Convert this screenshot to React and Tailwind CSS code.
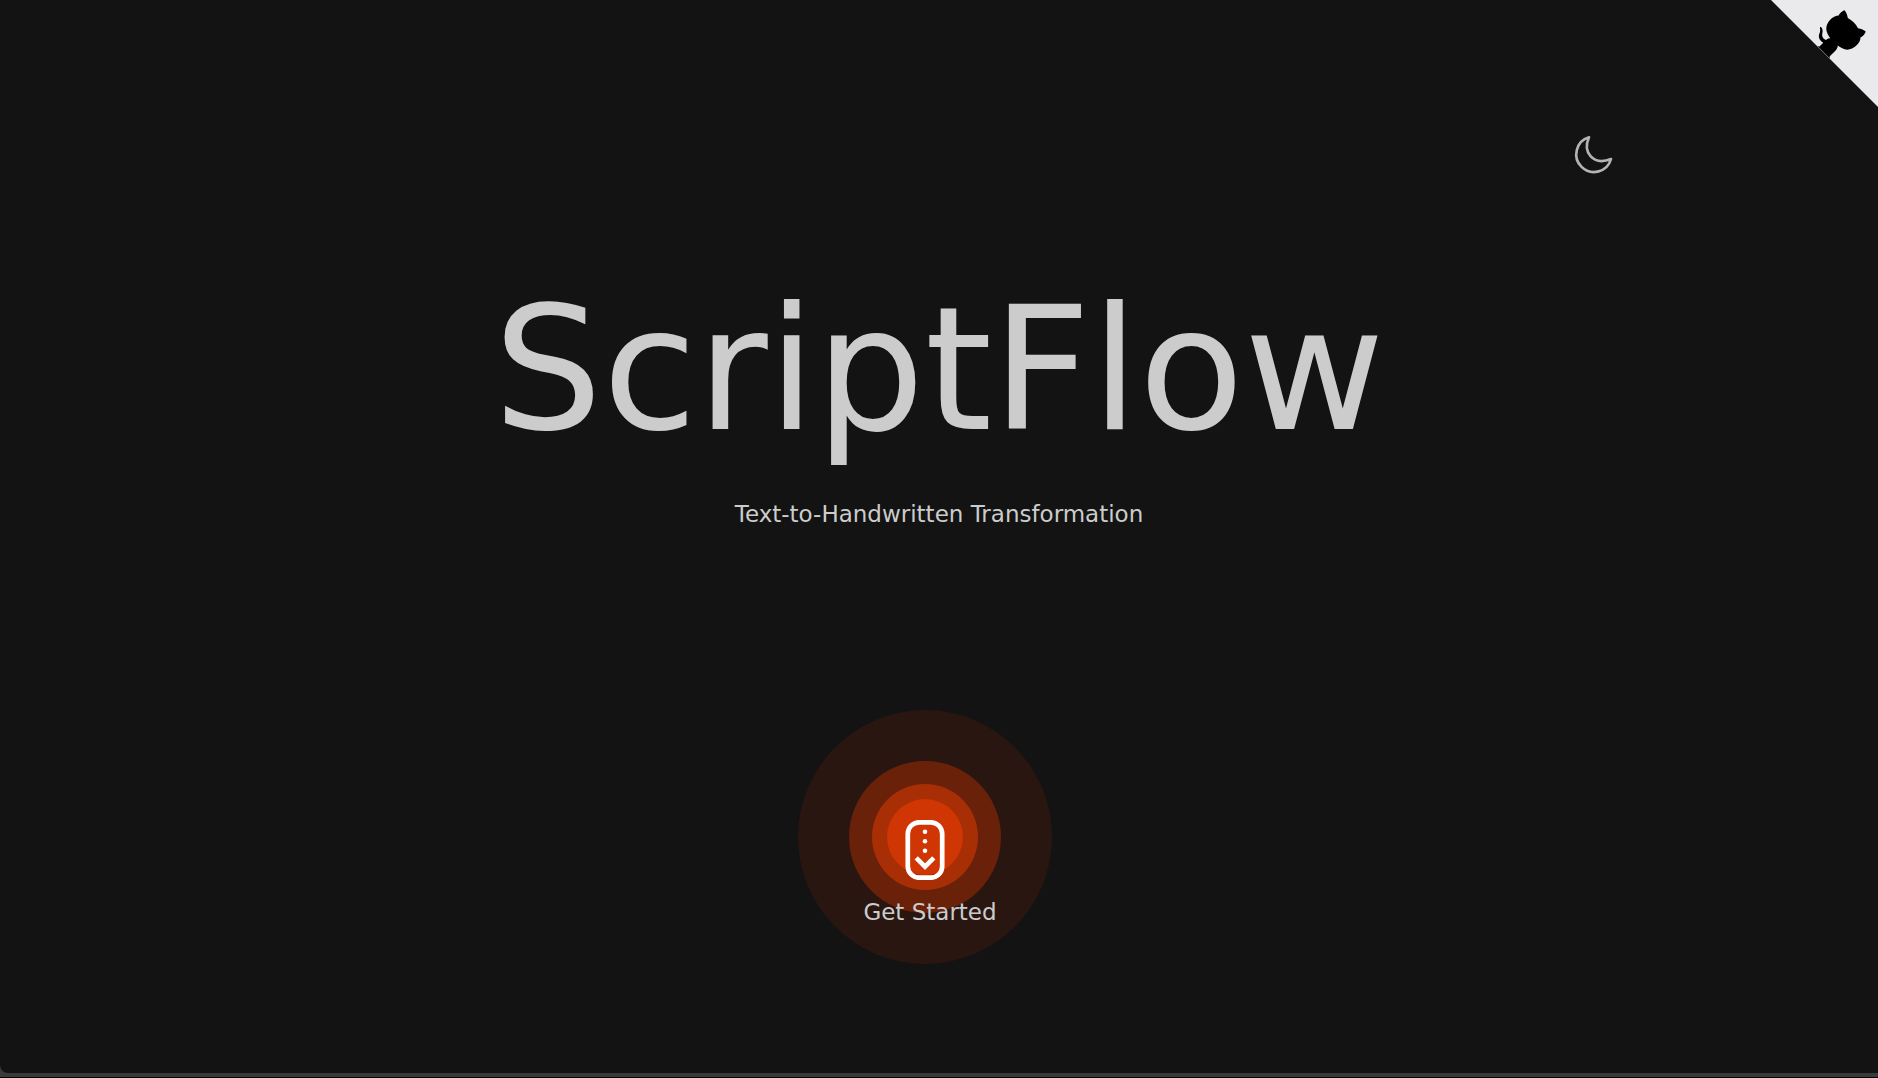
import React from "react";

function GithubCorner() {
  return (
    <a href="#github" aria-label="View source on GitHub" className="absolute top-0 right-0">
      <svg viewBox="0 0 250 250" className="size-[107px] fill-[#eaeaec] text-black" aria-hidden="true">
        <path d="M0,0 L250,250 L250,0 Z" />
        <g fill="currentColor" transform="translate(-19.8 -20.7) scale(1.115)">
          <path d="M128.3,109.0 C113.8,99.7 119.0,89.6 119.0,89.6 C122.0,82.7 120.5,78.6 120.5,78.6 C119.2,72.0 123.4,76.3 123.4,76.3 C127.3,80.9 125.5,87.3 125.5,87.3 C122.9,97.6 130.6,101.9 134.4,103.2" />
          <path d="M115.0,115.0 C114.9,115.1 118.7,116.5 119.8,115.4 L133.7,101.6 C136.9,99.2 139.9,98.4 142.2,98.6 C133.8,88.0 127.5,74.4 143.8,58.0 C148.5,53.4 154.0,51.2 159.7,51.0 C160.3,49.4 163.2,43.6 171.4,40.1 C171.4,40.1 176.1,42.5 178.8,56.2 C183.1,58.6 187.2,61.8 190.9,65.4 C194.5,69.0 197.7,73.2 200.1,77.6 C213.8,80.2 216.3,84.9 216.3,84.9 C212.7,93.1 206.9,96.0 205.4,96.6 C205.1,102.4 203.0,107.8 198.3,112.5 C181.9,128.9 168.3,122.5 157.7,114.1 C157.9,116.9 156.7,120.9 152.7,124.9 L141.0,136.5 C139.8,137.7 141.6,141.9 141.8,141.8 Z" />
        </g>
      </svg>
    </a>
  );
}

function MoonIcon() {
  return (
    <svg viewBox="0 0 132 132" className="size-11" fill="none" stroke="#b4b4b4" strokeWidth="8" strokeLinejoin="round" aria-hidden="true">
      <path d="M54 13 A53 53 0 1 0 120 78 C66 99 34 58 54 13 Z" />
    </svg>
  );
}

function ScrollIcon() {
  return (
    <svg viewBox="0 0 40 60" className="h-[60px] w-10" fill="none" stroke="white" aria-hidden="true">
      <rect x="2.8" y="2.3" width="34.4" height="55.4" rx="11.5" strokeWidth="4.7" />
      <g fill="white" stroke="none">
        <circle cx="20" cy="11.8" r="2.3" />
        <circle cx="20" cy="21.3" r="2.3" />
        <circle cx="20" cy="30.7" r="2.3" />
      </g>
      <path d="M11.2 37.8 L20 46.7 L28.8 37.8" strokeWidth="4.6" />
    </svg>
  );
}

function StartButton() {
  return (
    <button type="button" className="mr-7 grid size-[254px] cursor-pointer place-items-center rounded-full bg-[#2a1610]">
      <span className="col-start-1 row-start-1 grid size-[152px] place-items-center rounded-full bg-[#6a210a]">
        <span className="grid size-[106px] place-items-center rounded-full bg-[#a82e06]">
          <span className="size-[76px] rounded-full bg-[#d03604]" />
        </span>
      </span>
      <span className="col-start-1 row-start-1 flex flex-col items-center pt-[74px]">
        <ScrollIcon />
        <span className="mt-4 pl-2.5 text-[23px] leading-8">Get Started</span>
      </span>
    </button>
  );
}

export default function App() {
  return (
    <div className="flex min-h-screen flex-col border-b border-black bg-[#3a3a3a] pb-1 font-['DejaVu_Sans',Verdana,sans-serif] text-[#cccccc]">
      <main className="relative flex grow flex-col rounded-bl-lg bg-[#131313]">
        <GithubCorner />
        <header className="flex justify-end pt-[133px] pr-[263px]">
          <button type="button" aria-label="Toggle dark mode" className="cursor-pointer">
            <MoonIcon />
          </button>
        </header>
        <section className="flex flex-col items-center pt-[93px]">
          <h1 className="text-[172px] leading-[200px]">ScriptFlow</h1>
          <p className="mt-7 text-[23px] leading-8">Text-to-Handwritten Transformation</p>
        </section>
        <div className="flex justify-center pt-45 pb-24">
          <StartButton />
        </div>
      </main>
    </div>
  );
}
